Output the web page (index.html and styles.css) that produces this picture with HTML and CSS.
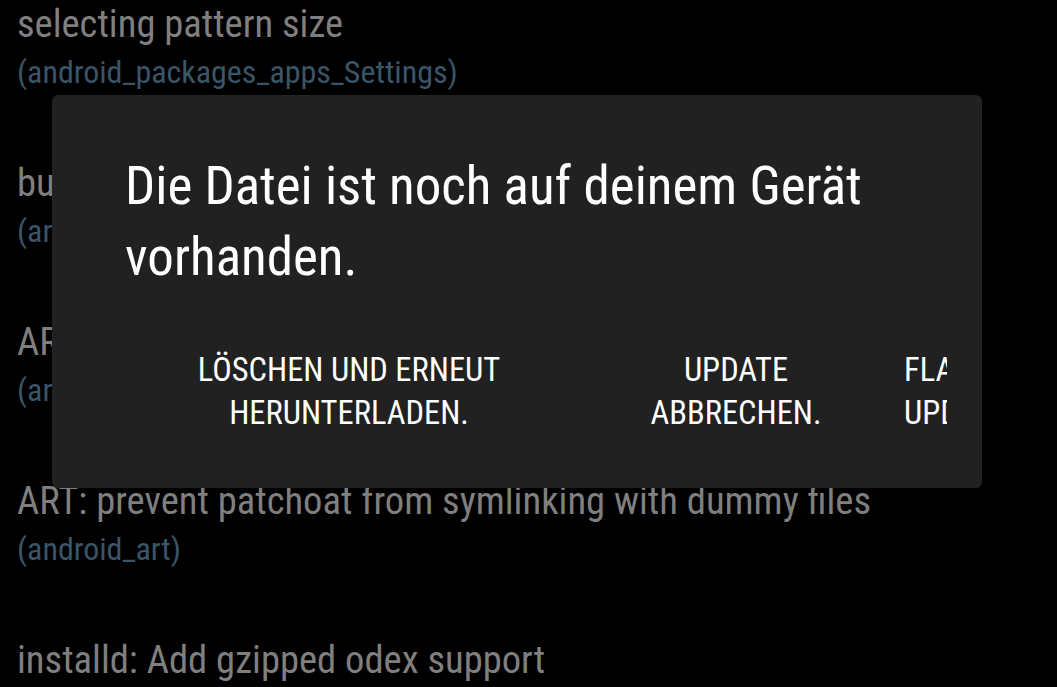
FILE: index.html
```html
<!DOCTYPE html>
<html lang="de">
<head>
<meta charset="utf-8">
<title>Dialog</title>
<link rel="stylesheet" href="styles.css">
</head>
<body>
<main class="list">
  <div class="item">
    <div class="item-title">selecting pattern size</div>
    <div class="item-sub">(android_packages_apps_Settings)</div>
  </div>
  <div class="item">
    <div class="item-title">build: Add missing dependency for libnativehelper</div>
    <div class="item-sub">(android_build)</div>
  </div>
  <div class="item">
    <div class="item-title">ART: Fix patchoat for relocated boot image</div>
    <div class="item-sub">(android_art)</div>
  </div>
  <div class="item">
    <div class="item-title">ART: prevent patchoat from symlinking with dummy files</div>
    <div class="item-sub">(android_art)</div>
  </div>
  <div class="item">
    <div class="item-title">installd: Add gzipped odex support</div>
    <div class="item-sub">(android_frameworks_native)</div>
  </div>
</main>

<div class="dialog" role="dialog">
  <h1 class="dialog-title">Die Datei ist noch auf deinem Gerät vorhanden.</h1>
  <div class="dialog-buttons">
    <button class="btn btn-first">LÖSCHEN UND ERNEUT<br>HERUNTERLADEN.</button>
    <button class="btn btn-second">UPDATE<br>ABBRECHEN.</button>
    <button class="btn btn-third">FLASHEN UND<br>UPDATE FORTSETZEN.</button>
  </div>
</div>
</body>
</html>
```

FILE: styles.css
```css
html, body {
  margin: 0;
  padding: 0;
  background: #000;
  height: 100%;
  overflow: hidden;
}

body {
  font-family: "Roboto Condensed", Roboto, sans-serif;
  font-stretch: condensed;
}

.list {
  height: 100vh;
  overflow: hidden;
  padding-left: 17px;
  display: flex;
  flex-direction: column;
  gap: 63px;
}

.item {
  flex: none;
  white-space: nowrap;
}

.item-title {
  font-size: 38.6px;
  line-height: 48px;
  color: #7f7f7f;
}

.item-sub {
  font-size: 32px;
  line-height: 48px;
  color: #3a5567;
}

.dialog {
  position: absolute;
  left: 52px;
  top: 95px;
  width: 930px;
  height: 393px;
  box-sizing: border-box;
  background: #212121;
  border-radius: 6px;
  padding: 56px 35px 0 73px;
}

.dialog-title {
  margin: 0;
  font-weight: 400;
  font-size: 53px;
  line-height: 71px;
  color: #fff;
  width: 770px;
}

.dialog-buttons {
  margin-top: 56px;
  display: flex;
  overflow: hidden;
  white-space: nowrap;
}

.btn {
  flex: none;
  background: none;
  border: 0;
  padding: 0;
  font-family: inherit;
  font-stretch: condensed;
  font-size: 32.5px;
  line-height: 43px;
  color: #fff;
  text-align: center;
}

.btn-first {
  width: 400px;
  margin-left: 24px;
}

.btn-second {
  width: 300px;
  margin-left: 37px;
}

.btn-third {
  text-align: left;
  margin-left: 18px;
}
```
